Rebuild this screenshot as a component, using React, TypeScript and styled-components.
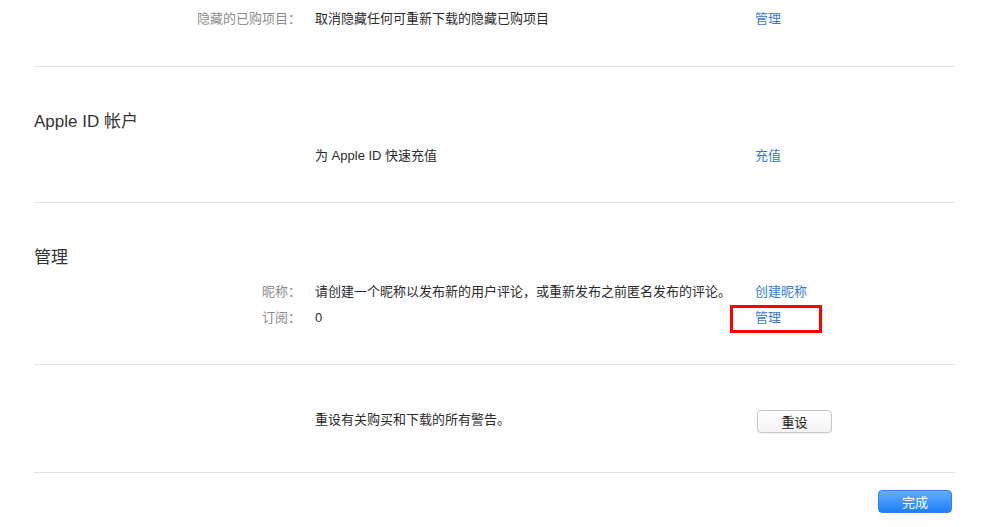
import React from "react";
import styled, { createGlobalStyle } from "styled-components";

const GlobalStyle = createGlobalStyle`
  body {
    margin: 0;
    background: #fff;
    font-family: "Liberation Sans", "Noto Sans CJK SC", sans-serif;
    color: #333;
  }
`;

const Page = styled.div`
  width: 921px;
  padding: 0 36px 0 34px;
`;

const Section = styled.section<{ $top: number; $bottom: number }>`
  padding: ${(p) => p.$top}px 0 ${(p) => p.$bottom}px;
  border-bottom: 1px solid #e3e3e3;
`;

const Title = styled.h2`
  margin: 0 0 10px;
  font-size: 17px;
  line-height: 22px;
  font-weight: normal;
  color: #333;
`;

const Row = styled.div`
  display: grid;
  grid-template-columns: 267px 440px 1fr;
  column-gap: 14px;
  align-items: center;
  height: 26px;
  font-size: 13px;
  line-height: 26px;
`;

const Label = styled.span`
  text-align: right;
  color: #8c8c8c;
`;

const Value = styled.span`
  color: #2b2b2b;
`;

const Action = styled.span`
  position: relative;
  margin-left: -14px;
`;

const Link = styled.a`
  color: #3a78d0;
  text-decoration: none;
  cursor: pointer;
`;

const Highlight = styled.span`
  position: absolute;
  left: -25px;
  top: 0;
  width: 92px;
  height: 28px;
  box-sizing: border-box;
  border: 3px solid #f00;
  pointer-events: none;
`;

const Button = styled.button`
  display: block;
  width: 75px;
  height: 23px;
  margin: 2px 0 0 2px;
  padding: 0;
  border: 1px solid #c6c6c6;
  border-radius: 4px;
  background: linear-gradient(#ffffff, #f4f4f4);
  box-shadow: 0 1px 1px rgba(0, 0, 0, 0.06);
  font-family: inherit;
  font-size: 13px;
  color: #222;
`;

const Footer = styled.div`
  display: flex;
  justify-content: flex-end;
  padding: 17px 3px 0 0;
`;

const DoneButton = styled.button`
  width: 74px;
  height: 23px;
  padding: 0;
  border: 1px solid #2f82ef;
  border-radius: 4px;
  background: linear-gradient(#64aeff, #1b7ff6);
  font-family: inherit;
  font-size: 13px;
  color: #fff;
`;

export default function App() {
  return (
    <Page>
      <GlobalStyle />
      <Section $top={6} $bottom={34}>
        <Row>
          <Label>隐藏的已购项目：</Label>
          <Value>取消隐藏任何可重新下载的隐藏已购项目</Value>
          <Action>
            <Link>管理</Link>
          </Action>
        </Row>
      </Section>

      <Section $top={44} $bottom={33}>
        <Title>Apple ID 帐户</Title>
        <Row>
          <Label />
          <Value>为 Apple ID 快速充值</Value>
          <Action>
            <Link>充值</Link>
          </Action>
        </Row>
      </Section>

      <Section $top={44} $bottom={33}>
        <Title>管理</Title>
        <Row>
          <Label>昵称：</Label>
          <Value>请创建一个昵称以发布新的用户评论，或重新发布之前匿名发布的评论。</Value>
          <Action>
            <Link>创建昵称</Link>
          </Action>
        </Row>
        <Row>
          <Label>订阅：</Label>
          <Value>0</Value>
          <Action>
            <Link>管理</Link>
            <Highlight />
          </Action>
        </Row>
      </Section>

      <Section $top={42} $bottom={39}>
        <Row>
          <Label />
          <Value>重设有关购买和下载的所有警告。</Value>
          <Action>
            <Button>重设</Button>
          </Action>
        </Row>
      </Section>

      <Footer>
        <DoneButton>完成</DoneButton>
      </Footer>
    </Page>
  );
}
